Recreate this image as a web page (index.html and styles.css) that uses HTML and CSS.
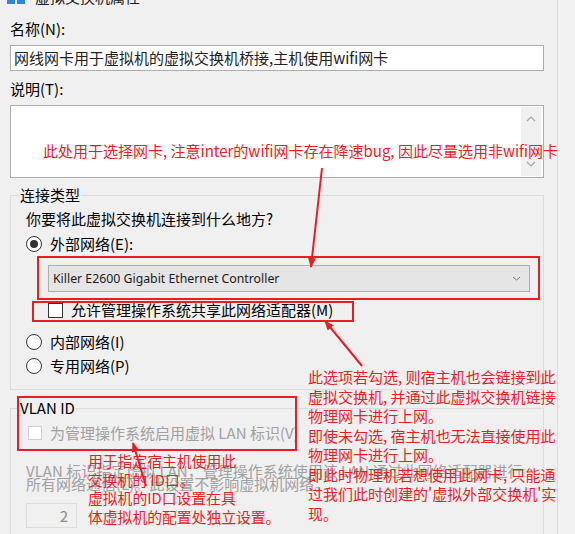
FILE: index.html
```html
<!DOCTYPE html>
<html lang="zh-CN">
<head>
  <meta charset="UTF-8">
  <title>虚拟交换机属性</title>
  <link rel="stylesheet" href="styles.css">
</head>
<body>
<div class="page">
  <div class="main">
    <div class="title"><span class="title-icon"><i></i><i></i></span>虚拟交换机属性</div>

    <div class="label label-name">名称(N):</div>
    <div class="input">网线网卡用于虚拟机的虚拟交换机桥接,主机使用wifi网卡</div>

    <div class="label label-desc">说明(T):</div>
    <div class="textarea">
      <div class="textarea-text"></div>
      <div class="scrollbar">
        <svg width="10" height="6" viewBox="0 0 10 6"><path d="M1 5 L5 1 L9 5" fill="none" stroke="#a6a6a6" stroke-width="1.2"/></svg>
        <svg width="10" height="6" viewBox="0 0 10 6"><path d="M1 1 L5 5 L9 1" fill="none" stroke="#a6a6a6" stroke-width="1.2"/></svg>
      </div>
    </div>

    <fieldset class="group group-type">
      <legend>连接类型</legend>
      <div class="group-body">
        <div class="row question">你要将此虚拟交换机连接到什么地方?</div>
        <div class="row option option-ext"><span class="radio checked"></span>外部网络(E):</div>
        <div class="combo">
          <span>Killer E2600 Gigabit Ethernet Controller</span>
          <svg width="9" height="5" viewBox="0 0 9 5"><path d="M1 1 L4.5 4 L8 1" fill="none" stroke="#777" stroke-width="1"/></svg>
        </div>
        <div class="row check-row"><span class="checkbox"></span>允许管理操作系统共享此网络适配器(M)</div>
        <div class="row option option-int"><span class="radio"></span>内部网络(I)</div>
        <div class="row option option-priv"><span class="radio"></span>专用网络(P)</div>
      </div>
    </fieldset>

    <fieldset class="group group-vlan">
      <legend>VLAN ID</legend>
      <div class="group-body">
        <div class="row check-row disabled"><span class="checkbox"></span>为管理操作系统启用虚拟 LAN 标识(V)</div>
        <div class="vlan-desc">VLAN 标识指定虚拟 LAN，管理操作系统使用该 LAN 通过此网络适配器进行<br>所有网络通信(L)。此设置不影响虚拟机网络。</div>
        <div class="spin">2</div>
      </div>
    </fieldset>
  </div>
  <div class="side"></div>

  <!-- 标注 -->
  <div class="mark mark-combo"></div>
  <div class="mark mark-share"></div>
  <div class="mark mark-vlan"></div>

  <div class="note note-top">此处用于选择网卡, 注意inter的wifi网卡存在降速bug, 因此尽量选用非wifi网卡</div>
  <div class="note note-side">此选项若勾选, 则宿主机也会链接到此<br>虚拟交换机, 并通过此虚拟交换机链接<br>物理网卡进行上网。<br>即使未勾选, 宿主机也无法直接使用此<br>物理网卡进行上网。<br>即此时物理机若想使用此网卡, 只能通<br>过我们此时创建的'虚拟外部交换机'实<br>现。</div>
  <div class="note note-vlan">用于指定宿主机使用此<br>交换机的 ID口。<br>虚拟机的ID口设置在具<br>体虚拟机的配置处独立设置。</div>

  <svg class="arrows" width="575" height="534" viewBox="0 0 575 534">
    <defs>
      <marker id="head" markerWidth="10" markerHeight="8" refX="9" refY="4" orient="auto" markerUnits="userSpaceOnUse">
        <path d="M0 0 L10 4 L0 8 z" fill="#ed1c24"/>
      </marker>
    </defs>
    <line x1="322" y1="168" x2="311" y2="267" stroke="#ed1c24" stroke-width="2" marker-end="url(#head)"/>
    <line x1="362" y1="366" x2="325" y2="321" stroke="#ed1c24" stroke-width="2" marker-end="url(#head)"/>
    <line x1="146" y1="486" x2="133" y2="443" stroke="#ed1c24" stroke-width="2" marker-end="url(#head)"/>
  </svg>
</div>
</body>
</html>
```

FILE: styles.css
```css
body {
  margin: 0;
  background-color: #f0f0f0;
  font-family: "Noto Sans CJK SC", "Noto Sans", sans-serif;
  font-size: 15px;
  color: #000;
}

.page {
  position: relative;
  width: 575px;
  height: 534px;
  overflow: hidden;
  display: flex;
}

.main {
  width: 557px;
  padding: 0 13px 0 10px;
  box-sizing: border-box;
}

.side {
  flex: 1;
  border-left: 1px solid #dcdcdc;
  background-color: #f2f2f2;
}

.title {
  height: 20px;
  line-height: 20px;
  margin-top: -13px;
  display: flex;
  align-items: center;
  color: #1e1e1e;
}

.title-icon {
  display: flex;
  gap: 2px;
  margin: 0 10px 0 -3px;
}

.title-icon i {
  display: block;
  width: 8px;
  height: 14px;
  background-color: #2b88d8;
}

.label {
  line-height: 20px;
}

.label-name {
  margin-top: 12px;
}

.label-desc {
  margin-top: 8px;
}

.input {
  margin-top: 6px;
  height: 26px;
  line-height: 24px;
  padding-left: 3px;
  border: 1px solid #adadad;
  background-color: #fff;
  box-sizing: border-box;
  color: #222;
  white-space: nowrap;
}

.textarea {
  margin-top: 6px;
  height: 73px;
  border: 1px solid #adadad;
  background-color: #fff;
  box-sizing: border-box;
  display: flex;
}

.textarea-text {
  flex: 1;
}

.scrollbar {
  width: 20px;
  margin: 1px 2px 1px 0;
  background-color: #f0f0f0;
  display: flex;
  flex-direction: column;
  justify-content: space-between;
  align-items: center;
  padding: 9px 0 9px;
}

.group {
  margin: 0;
  padding: 0 0 0 8px;
  border: 1px solid #dcdcdc;
  min-width: 0;
}

.group legend {
  padding: 0 1px;
  line-height: 20px;
}

.group-body {
  padding-left: 7px;
}

.group-type {
  margin-top: 7px;
  padding-bottom: 13px;
}

.group-vlan {
  margin-top: 8px;
  height: 200px;
}

.row {
  line-height: 20px;
  display: flex;
  align-items: center;
}

.question {
  margin-top: 4px;
}

.option {
  gap: 8px;
}

.option-ext {
  margin-top: 5px;
}

.option-int {
  margin-top: 12px;
}

.option-priv {
  margin-top: 4px;
}

.radio {
  width: 16px;
  height: 16px;
  border: 1px solid #333;
  border-radius: 50%;
  background-color: #fff;
  box-sizing: border-box;
  display: flex;
  align-items: center;
  justify-content: center;
}

.radio.checked::after {
  content: "";
  width: 8px;
  height: 8px;
  border-radius: 50%;
  background-color: #333;
}

.combo {
  margin: 11px 0 0 22px;
  width: 482px;
  height: 27px;
  border: 1px solid #adadad;
  background-color: #e5e5e5;
  box-sizing: border-box;
  display: flex;
  align-items: center;
  justify-content: space-between;
  padding: 0 8px 0 4px;
  font-family: "Noto Sans", sans-serif;
  font-size: 12.3px;
  color: #1a1a1a;
}

.check-row {
  margin: 8px 0 0 22px;
  gap: 8px;
}

.checkbox {
  width: 15px;
  height: 15px;
  border: 1px solid #333;
  background-color: #fff;
  box-sizing: border-box;
}

.check-row.disabled {
  margin: 5px 0 0 2px;
  color: #a0a0a0;
}

.check-row.disabled .checkbox {
  width: 14px;
  height: 14px;
  border-color: #cfcfcf;
}

.vlan-desc {
  margin-top: 21px;
  font-size: 15px;
  line-height: 13px;
  color: #a0a0a0;
  white-space: nowrap;
}

.spin {
  margin-top: 13px;
  width: 51px;
  height: 25px;
  border: 1px solid #dcdcdc;
  box-sizing: border-box;
  text-align: right;
  padding-right: 8px;
  line-height: 23px;
  color: #8a8a8a;
}

/* 标注 */
.mark {
  position: absolute;
  border: 2px solid #ed1c24;
  box-sizing: border-box;
}

.mark-combo {
  left: 37px;
  top: 256px;
  width: 503px;
  height: 44px;
}

.mark-share {
  left: 32px;
  top: 301px;
  width: 322px;
  height: 21px;
}

.mark-vlan {
  left: 17px;
  top: 396px;
  width: 280px;
  height: 55px;
}

.note {
  position: absolute;
  color: #ed1c24;
  font-size: 15px;
  white-space: nowrap;
}

.note-top {
  left: 43px;
  top: 141px;
  line-height: 20px;
}

.note-side {
  left: 308px;
  top: 367px;
  line-height: 19.5px;
}

.note-vlan {
  left: 88px;
  top: 452px;
  font-size: 14.8px;
  line-height: 18.7px;
}

.arrows {
  position: absolute;
  left: 0;
  top: 0;
  pointer-events: none;
}
```
